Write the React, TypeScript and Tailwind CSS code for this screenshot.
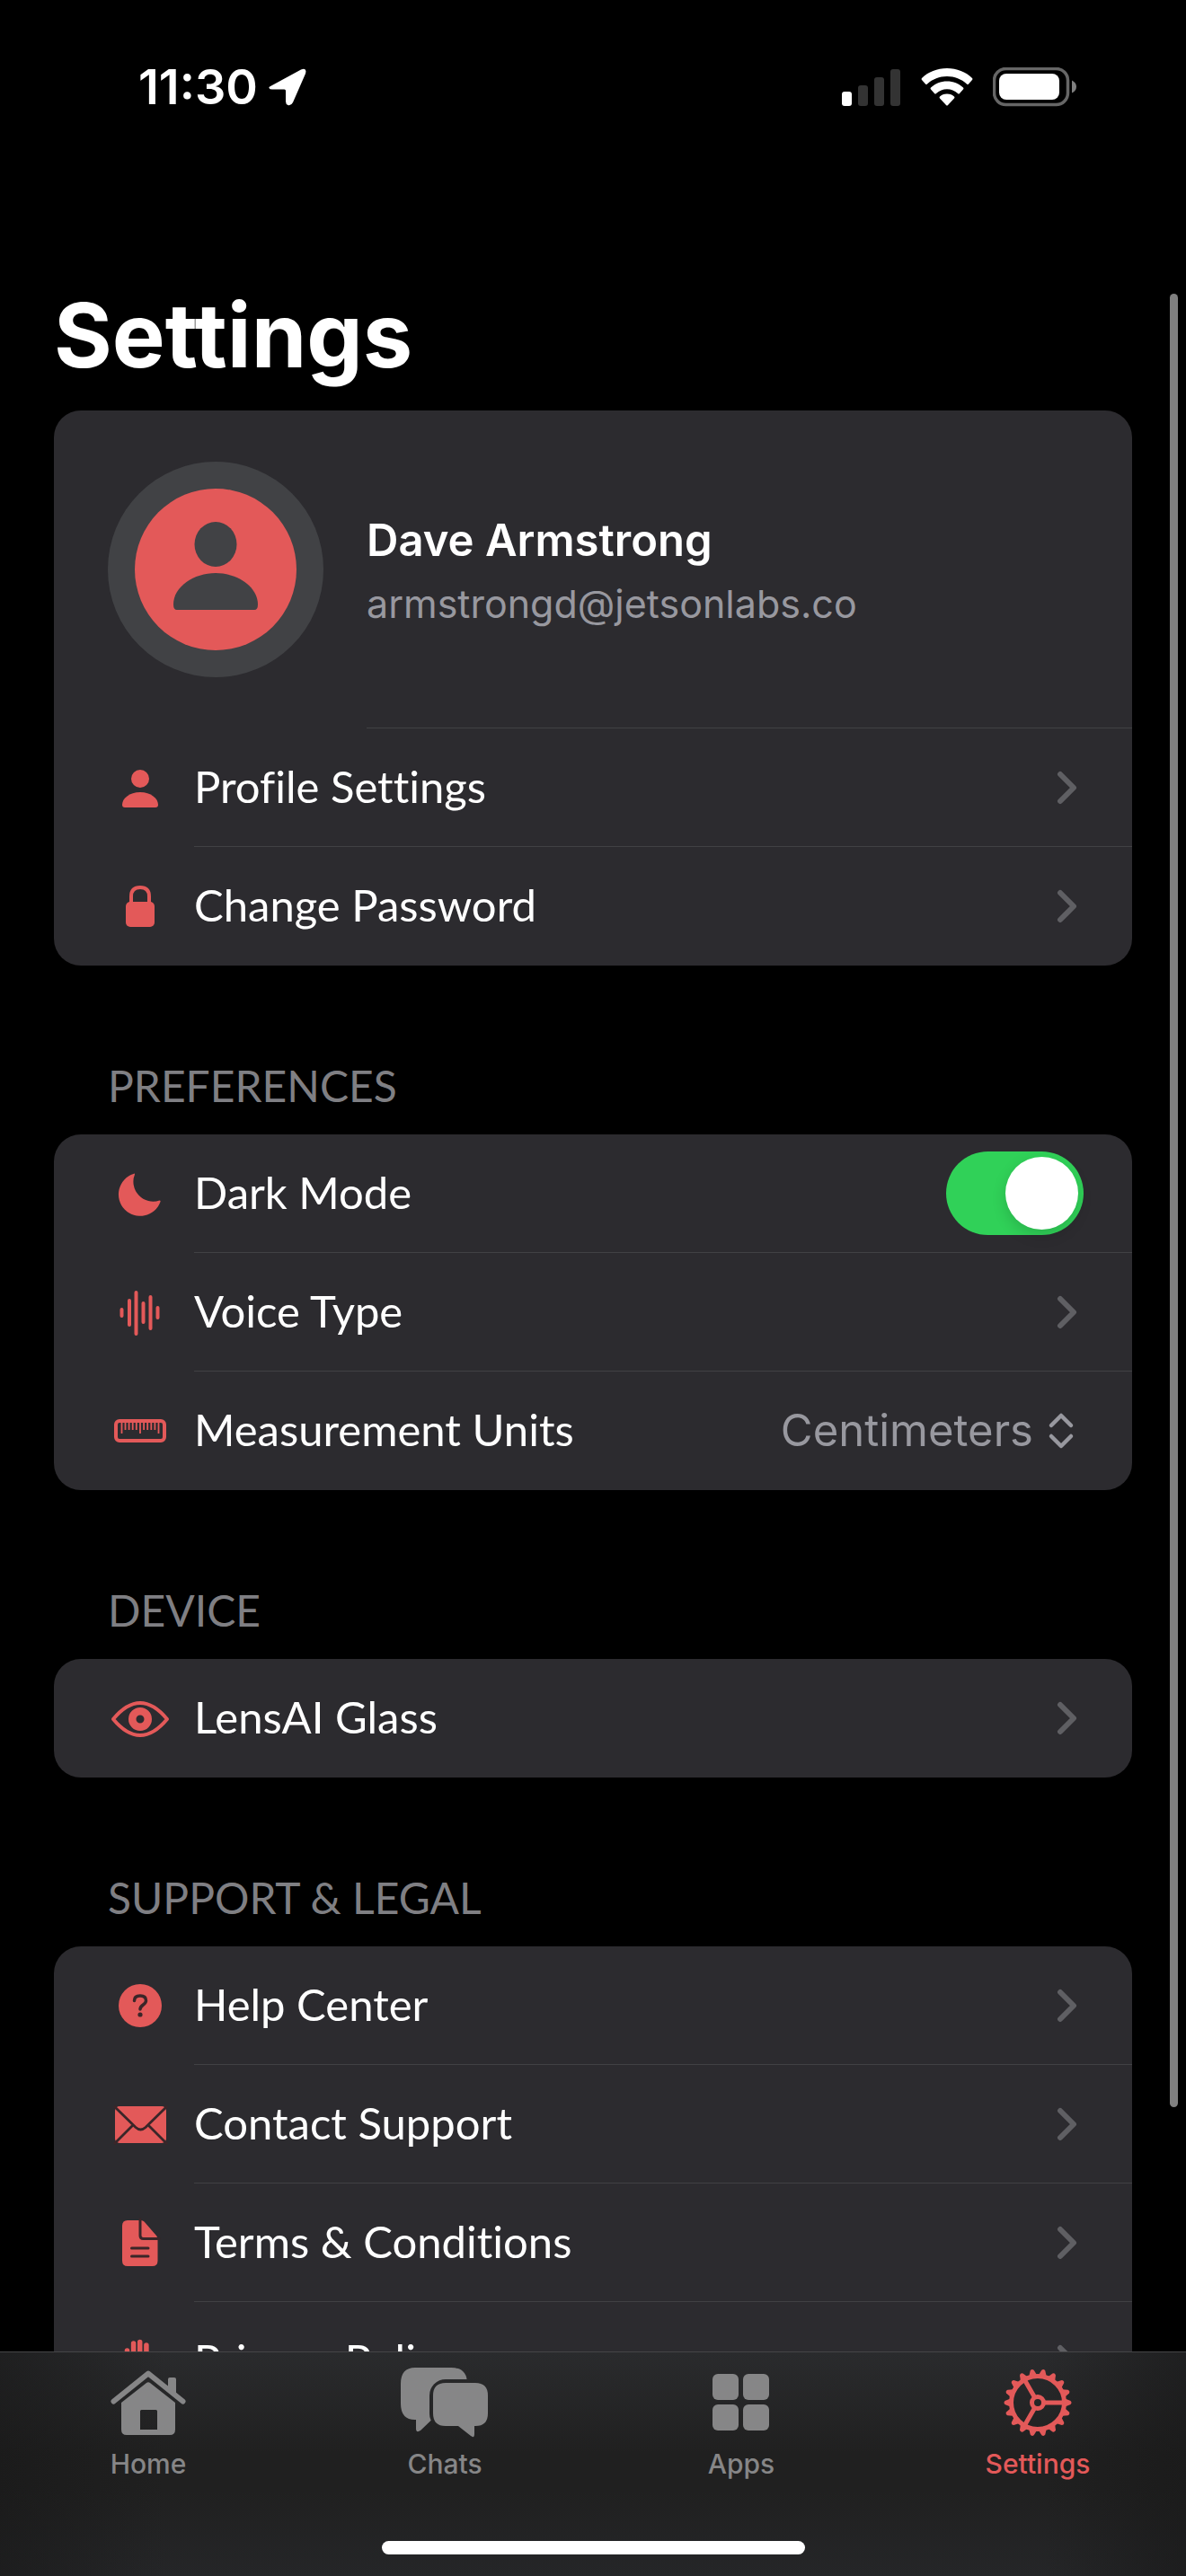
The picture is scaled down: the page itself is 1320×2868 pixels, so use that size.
import { ReactNode, useState } from 'react';
import clsx from 'clsx';

const TEETH = Array.from({ length: 18 }, (_, i) => i * 20);

const RowIcon = ({ children }: { children: ReactNode }) => (
  <svg viewBox="0 0 72 72" className="size-[72px] shrink-0 fill-[#e35959]" aria-hidden="true">
    {children}
  </svg>
);

const PersonIcon = () => (
  <RowIcon>
    <circle cx="36" cy="26" r="10" />
    <path d="M19 58C17 58 16 57 16 55C16 48 24 41 36 41C48 41 56 48 56 55C56 57 55 58 53 58Z" />
  </RowIcon>
);

const LockIcon = () => (
  <RowIcon>
    <rect x="20" y="31" width="32" height="28" rx="5" />
    <path d="M26 34V25C26 18 30 15 36 15C42 15 46 18 46 25V34" fill="none" stroke="#e35959" strokeWidth="4" />
  </RowIcon>
);

const MoonIcon = () => (
  <RowIcon>
    <path d="M28.5 14A24 24 0 1 0 58.5 45Q59 43.500 57.500 43.500A22 22 0 0 1 30 14.500Q30 13 28.500 14Z" />
  </RowIcon>
);

const WaveIcon = () => (
  <RowIcon>
    <path
      d="M15.500 33V40M24 23V50M31.500 14V60M39.500 26V47M47.500 19V54M55.500 31V42"
      stroke="#e35959"
      strokeWidth="4"
      strokeLinecap="round"
    />
  </RowIcon>
);

const RulerIcon = () => (
  <RowIcon>
    <rect x="9" y="25" width="54" height="22" rx="4" fill="none" stroke="#e35959" strokeWidth="4" />
    <path
      d="M15.500 27V39M19.500 27V35M23.600 27V35M27.700 27V35M31.800 27V35M36 27V39M40.100 27V35M44.200 27V35M48.300 27V35M52.400 27V35M56.500 27V39"
      stroke="#e35959"
      strokeWidth="1.800"
    />
  </RowIcon>
);

const EyeIcon = () => (
  <RowIcon>
    <path
      d="M6 37C16 25 26 19 36 19C46 19 56 25 66 37C56 49 46 55 36 55C26 55 16 49 6 37Z"
      fill="none"
      stroke="#e35959"
      strokeWidth="4"
      strokeLinejoin="round"
    />
    <path d="M36 24A13 13 0 1 0 36 50A13 13 0 1 0 36 24ZM36 32.500A4.500 4.500 0 1 1 36 41.500A4.500 4.500 0 1 1 36 32.500Z" fillRule="evenodd" />
  </RowIcon>
);

const HelpIcon = () => (
  <RowIcon>
    <circle cx="36" cy="36" r="24" />
    <path d="M29.500 30.500C29.500 26.500 32 25 36 25C40 25 42.500 27 42.500 30.500C42.500 35 36 35 36 40" fill="none" stroke="#3a2629" strokeWidth="3.500" strokeLinecap="round" />
    <circle cx="36" cy="46" r="2.600" fill="#3a2629" />
  </RowIcon>
);

const MailIcon = () => (
  <RowIcon>
    <rect x="8" y="16" width="57" height="41" rx="5" />
    <path
      d="M7 16L31 39.500Q36.500 44.500 42 39.500L66 16M7 58L28 37M66 58L45 37"
      fill="none"
      stroke="#3a2629"
      strokeWidth="2.800"
    />
  </RowIcon>
);

const DocumentIcon = () => (
  <RowIcon>
    <path d="M22 11H37Q39 11 40.500 12.500L54 28Q55.500 30 55.500 32V56Q55.500 62 49.500 62H22Q16 62 16 56V17Q16 11 22 11Z" />
    <path d="M36 10V28Q36 31.500 39.500 31.500H57M26.500 42H45M26.500 51H45" fill="none" stroke="#3a2629" strokeWidth="3" strokeLinecap="round" />
  </RowIcon>
);

const HandIcon = () => (
  <RowIcon>
    <path
      d="M21.500 24V44M28.600 16V42M35.700 14.500V42M42.900 18V44M51 38L43 50"
      stroke="#e35959"
      strokeWidth="5.500"
      strokeLinecap="round"
    />
    <path d="M19 38H46V50Q44 62 33 62Q20 62 19 48Z" />
  </RowIcon>
);

const Chevron = () => (
  <svg viewBox="0 0 24 40" className="h-10 w-6 shrink-0" aria-hidden="true">
    <path d="M4 5L19 20L4 35" fill="none" stroke="#5f5f63" strokeWidth="6" strokeLinecap="round" strokeLinejoin="round" />
  </svg>
);

const HomeIcon = () => (
  <>
    <path d="M11.500 37.500L50 6.500L88.500 37.500" fill="none" stroke="currentColor" strokeWidth="6" strokeLinecap="round" strokeLinejoin="round" />
    <path d="M72 26V13Q72 11 74 11H79Q81 11 81 13V33Z" />
    <path
      d="M20 39L48 17Q50 15.500 52 17L80 39V69Q80 75 74 75H26Q20 75 20 69ZM42.500 47Q41 47 41 48.500V69H60V48.500Q60 47 58.500 47Z"
      fillRule="evenodd"
    />
  </>
);

const ChatsIcon = () => (
  <>
    <mask id="bubble-gap">
      <rect width="100" height="80" fill="white" />
      <rect x="33" y="13" width="70" height="56" rx="18" fill="black" />
    </mask>
    <g mask="url(#bubble-gap)">
      <path d="M17 0H57Q75 0 75 18V40Q75 58 57 58H35.500L23 70Q18 73 18 68V58H17Q1 58 1 40V18Q1 0 17 0Z" />
    </g>
    <path d="M51 17H84Q98 17 98 31V51Q98 65 84 65H83V74Q83 79 79 76L65 65H51Q37 65 37 51V31Q37 17 51 17Z" />
  </>
);

const AppsIcon = () => (
  <>
    <rect x="18" y="7" width="29" height="29" rx="6" />
    <rect x="52" y="7" width="29" height="29" rx="6" />
    <rect x="18" y="41" width="29" height="29" rx="6" />
    <rect x="52" y="41" width="29" height="29" rx="6" />
  </>
);

const GearIcon = () => (
  <>
    {TEETH.map((angle) => (
      <path key={angle} d="M45.500 8.500L48 2.500Q50 0.500 52 2.500L54.500 8.500Z" transform={`rotate(${angle + 10} 50 39)`} />
    ))}
    <g fill="none" stroke="currentColor">
      <circle cx="50" cy="39" r="29.500" strokeWidth="5" />
      <circle cx="50" cy="39" r="6.500" strokeWidth="5" />
      <path d="M57 39H80M46.500 33L35 13M46.500 45L35 65" strokeWidth="5" />
    </g>
  </>
);

const SectionTitle = ({ children }: { children: ReactNode }) => (
  <h2 className="pt-[104px] pb-6 pl-[60px] font-['Lato',sans-serif] text-[48px] leading-[60px] text-[#7f7f83]">{children}</h2>
);

const Card = ({ children }: { children: ReactNode }) => (
  <div className="overflow-hidden rounded-[30px] bg-[#2c2b2f]">{children}</div>
);

const rowLabel = "pb-1 font-['Lato',sans-serif] text-[49px] leading-[60px] text-white [font-variant-ligatures:none]";

type RowProps = {
  icon: ReactNode;
  last?: boolean;
  children: ReactNode;
};

const RowShell = ({ icon, last, children }: RowProps) => (
  <div className="flex h-[132px] items-center gap-6 pl-[60px]">
    {icon}
    <div className={clsx('flex h-full flex-1 items-center justify-between', !last && 'border-b border-[#414144]')}>
      {children}
    </div>
  </div>
);

const LinkRow = ({ icon, label, last }: { icon: ReactNode; label: string; last?: boolean }) => (
  <a href="#" className="block">
    <RowShell icon={icon} last={last}>
      <span className={rowLabel}>{label}</span>
      <span className="pr-[60px]">
        <Chevron />
      </span>
    </RowShell>
  </a>
);

const StatusBar = () => (
  <div className="flex h-[194px] shrink-0 items-center justify-between pr-[122px] pl-[154px]">
    <div className="flex items-center gap-3">
      <span className="text-[54px] leading-[60px] font-semibold">11:30</span>
      <svg viewBox="0 0 42 42" className="size-[42px] fill-white" aria-hidden="true">
        <path d="M2 20L36 1.500Q43 -1 41 6L27 38Q25 42 21.500 41Q19 40 19 37V25Q19 23.500 17.500 23.500H4Q1 23.500 0.500 22Q0 21 2 20Z" />
      </svg>
    </div>
    <div className="flex items-center gap-[22px]">
      <svg viewBox="0 0 66 42" className="h-[42px] w-[66px]" aria-hidden="true">
        <rect x="0" y="26" width="11" height="16" rx="3" fill="#fff" />
        <rect x="18" y="19" width="11" height="23" rx="3" fill="#333" />
        <rect x="36" y="10" width="11" height="32" rx="3" fill="#333" />
        <rect x="54" y="1" width="11" height="41" rx="3" fill="#333" />
      </svg>
      <svg viewBox="0 0 58 42" className="h-[42px] w-[58px] fill-white" aria-hidden="true">
        <path d="M29 0C40 0 50 4 57 11Q58 12 57 13L53 17.500Q52 18.500 51 17.500C45 12 37.500 9 29 9C20.500 9 13 12 7 17.500Q6 18.500 5 17.500L1 13Q0 12 1 11C8 4 18 0 29 0Z" />
        <path d="M29 14.500C36 14.500 42 17 47 21.500Q48 22.500 47 23.500L43 28Q42 29 41 28C37.500 25 33.500 23.300 29 23.300C24.500 23.300 20.500 25 17 28Q16 29 15 28L11 23.500Q10 22.500 11 21.500C16 17 22 14.500 29 14.500Z" />
        <path d="M29 28.500C32.500 28.500 35 29.700 37 31.500Q38 32.500 37 33.500L30 41Q29 42 28 41L21 33.500Q20 32.500 21 31.500C23 29.700 25.500 28.500 29 28.500Z" />
      </svg>
      <svg viewBox="0 0 93 44" className="h-11 w-[93px]" aria-hidden="true">
        <rect x="1.500" y="1.500" width="82" height="40" rx="13" fill="none" stroke="#666" strokeWidth="3.500" />
        <rect x="7" y="7" width="67" height="29" rx="8" fill="#fff" />
        <path d="M88 14.500Q93 17 93 21.500Q93 26 88 28.500Z" fill="#808080" />
      </svg>
    </div>
  </div>
);

const tabs = [
  { label: 'Home', icon: <HomeIcon /> },
  { label: 'Chats', icon: <ChatsIcon /> },
  { label: 'Apps', icon: <AppsIcon /> },
  { label: 'Settings', icon: <GearIcon />, active: true },
];

const TabBar = () => (
  <div className="flex h-[250px] shrink-0 flex-col items-center justify-between border-t border-[#454547] bg-[linear-gradient(to_right,#18181899,transparent_14%,transparent_88%,#18181899),linear-gradient(to_bottom,#2a2b2d,#202020_45%,#202020_62%,#252628)] pt-[17px] pb-6">
    <nav className="grid w-full grid-cols-4">
      {tabs.map((tab) => (
        <a
          key={tab.label}
          href="#"
          className={clsx('flex flex-col items-center gap-2', tab.active ? 'text-[#e35959]' : 'text-[#868687]')}
        >
          <svg viewBox="0 0 100 80" className="h-20 w-[100px] fill-current" aria-hidden="true">
            {tab.icon}
          </svg>
          <span className="text-[30px] leading-[38px] font-medium">{tab.label}</span>
        </a>
      ))}
    </nav>
    <div className="h-[15px] w-[471px] rounded-full bg-white" />
  </div>
);

const App = () => {
  const [darkMode, setDarkMode] = useState(true);
  const [units, setUnits] = useState('Centimeters');

  return (
    <div className="relative flex h-screen flex-col overflow-hidden bg-black font-['Inter',sans-serif] text-white">
      <StatusBar />

      <main className="min-h-0 flex-1 overflow-hidden px-[60px]">
        <h1 className="pt-[119px] pb-6 text-[99px] leading-[120px] font-bold">Settings</h1>

        {/* Account */}
        <Card>
          <div className="flex h-[354px] items-center gap-12 pl-[60px]">
            <div className="flex size-[240px] shrink-0 items-center justify-center rounded-full bg-[#414245]">
              <svg viewBox="0 0 180 180" className="size-[180px]" aria-hidden="true">
                <circle cx="90" cy="90" r="90" fill="#e35959" />
                <ellipse cx="90" cy="62" rx="23.500" ry="25" fill="#414245" />
                <path d="M47 135Q43 135 43 129C43 109 66 94 90 94C114 94 137 109 137 129Q137 135 133 135Z" fill="#414245" />
              </svg>
            </div>
            <div className="flex h-full flex-1 flex-col justify-center border-b border-[#414144] pt-1.5">
              <p className="text-[49px] leading-[70px] font-semibold">Dave Armstrong</p>
              <p className="text-[43px] leading-[70px] text-[#98989f]">armstrongd@jetsonlabs.co</p>
            </div>
          </div>
          <LinkRow icon={<PersonIcon />} label="Profile Settings" />
          <LinkRow icon={<LockIcon />} label="Change Password" last />
        </Card>

        <SectionTitle>PREFERENCES</SectionTitle>
        <Card>
          <RowShell icon={<MoonIcon />}>
            <label htmlFor="dark-mode" className={rowLabel}>Dark Mode</label>
            <input
              id="dark-mode"
              type="checkbox"
              role="switch"
              checked={darkMode}
              onChange={(e) => setDarkMode(e.target.checked)}
              className="mr-[54px] flex h-[93px] w-[153px] appearance-none items-center rounded-full bg-[#39393d] px-1.5 before:size-[81px] before:rounded-full before:bg-white before:shadow-[0_6px_16px_rgba(0,0,0,0.15)] checked:justify-end checked:bg-[#30d158]"
            />
          </RowShell>
          <LinkRow icon={<WaveIcon />} label="Voice Type" />
          <RowShell icon={<RulerIcon />} last>
            <label htmlFor="units" className={rowLabel}>Measurement Units</label>
            <div className="flex items-center gap-4 pr-[64px] text-[#98989f]">
              <select
                id="units"
                value={units}
                onChange={(e) => setUnits(e.target.value)}
                className="field-sizing-content appearance-none bg-transparent text-[49px] leading-[60px]"
              >
                <option>Centimeters</option>
                <option>Inches</option>
              </select>
              <svg viewBox="0 0 30 44" className="h-11 w-[30px]" aria-hidden="true">
                <path d="M4 16L15 5L26 16M4 28L15 39L26 28" fill="none" stroke="currentColor" strokeWidth="4.500" strokeLinecap="round" strokeLinejoin="round" />
              </svg>
            </div>
          </RowShell>
        </Card>

        <SectionTitle>DEVICE</SectionTitle>
        <Card>
          <LinkRow icon={<EyeIcon />} label="LensAI Glass" last />
        </Card>

        <SectionTitle>SUPPORT &amp; LEGAL</SectionTitle>
        <Card>
          <LinkRow icon={<HelpIcon />} label="Help Center" />
          <LinkRow icon={<MailIcon />} label="Contact Support" />
          <LinkRow icon={<DocumentIcon />} label="Terms & Conditions" />
          <LinkRow icon={<HandIcon />} label="Privacy Policy" last />
        </Card>
      </main>

      {/* Scroll indicator */}
      <div className="absolute top-[327px] right-[9px] h-[2019px] w-[9px] rounded-full bg-[#808080]" />

      <TabBar />
    </div>
  );
};

export default App;
